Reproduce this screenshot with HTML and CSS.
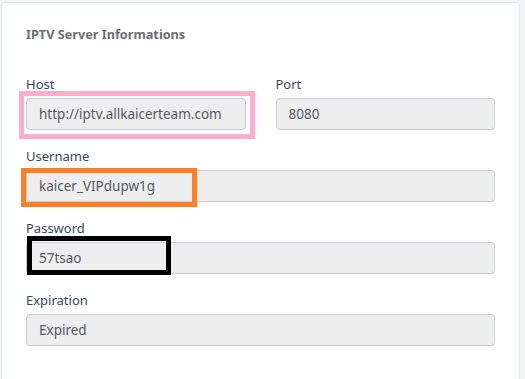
FILE: index.html
```html
<!DOCTYPE html>
<html>
<head>
<meta charset="utf-8">
<link rel="stylesheet" href="styles.css">
</head>
<body>
<div class="card">
  <h3 class="title">IPTV Server Informations</h3>
  <div class="row">
    <div class="group">
      <label class="label">Host</label>
      <div class="input">http://iptv.allkaicerteam.com</div>
    </div>
    <div class="group">
      <label class="label">Port</label>
      <div class="input">8080</div>
    </div>
  </div>
  <div class="group">
    <label class="label">Username</label>
    <div class="input">kaicer_VIPdupw1g</div>
  </div>
  <div class="group">
    <label class="label">Password</label>
    <div class="input">57tsao</div>
  </div>
  <div class="group">
    <label class="label">Expiration</label>
    <div class="input">Expired</div>
  </div>
  <div class="mark mark-pink"></div>
  <div class="mark mark-orange"></div>
  <div class="mark mark-black"></div>
</div>
</body>
</html>
```

FILE: styles.css
```css
html, body {
  margin: 0;
  padding: 0;
  background: #f4f5f7;
  height: 379px;
  overflow: hidden;
}
body {
  box-sizing: border-box;
  padding: 2px 5px 0 1px;
  font-family: "Noto Sans", "Open Sans", sans-serif;
}
.card {
  position: relative;
  background: #ffffff;
  border: 1px solid #e4e6ea;
  border-radius: 4px;
  padding: 21px 24px 20px 24px;
}
.title {
  margin: 0 0 30px 0;
  font-size: 12.7px;
  line-height: 20px;
  font-weight: 700;
  color: #6b6e72;
}
.row {
  display: grid;
  grid-template-columns: 1fr 1fr;
  column-gap: 30px;
}
.group {
  display: flex;
  flex-direction: column;
  margin-bottom: 16px;
}
.label {
  font-size: 13px;
  line-height: 20px;
  margin-bottom: 4px;
  color: #3a4657;
}
.input {
  box-sizing: border-box;
  height: 32px;
  line-height: 30px;
  padding: 0 12px;
  background: #eeeeee;
  border: 1px solid #c9ccd0;
  border-radius: 4px;
  font-size: 13.5px;
  color: #555a60;
  white-space: nowrap;
  overflow: hidden;
}
.mark {
  position: absolute;
  box-sizing: border-box;
  border-style: solid;
  border-width: 5px;
}
.mark-pink {
  border-color: #ffaec9;
  left: 17px;
  top: 88px;
  width: 236px;
  height: 48px;
}
.mark-orange {
  border-color: #ff7f27;
  left: 19px;
  top: 165px;
  width: 176px;
  height: 39px;
}
.mark-black {
  border-color: #000000;
  left: 25px;
  top: 233px;
  width: 144px;
  height: 39px;
}
```
